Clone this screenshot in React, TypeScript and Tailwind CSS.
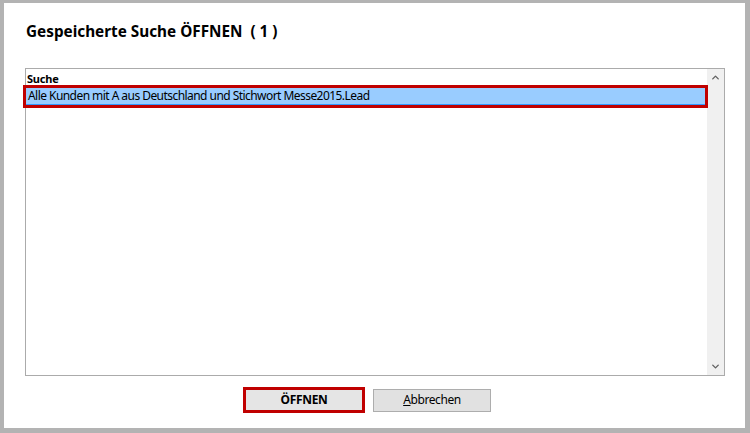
import { ChevronUp, ChevronDown } from 'lucide-react';

const font = { fontFamily: '"Noto Sans", "Open Sans", sans-serif' };

export default function App() {
  return (
    <div className="w-[750px] h-[433px] bg-[#b3b3b3] pt-[3px] pl-[4px] pr-[5px] pb-[5px]" style={font}>
      <div className="w-full h-full bg-white flex flex-col">
        {/* Title */}
        <div className="pl-[22px] pt-[18px] h-[65px]">
          <h1 className="text-[15.3px] leading-[20px] font-bold text-black">
            Gespeicherte Suche ÖFFNEN&nbsp;&nbsp;( 1 )
          </h1>
        </div>

        {/* List */}
        <div className="ml-[21px] w-[700px] h-[308px] border border-[#ababab] flex">
          <div className="flex-1 flex flex-col">
            <div className="h-[19px] pl-[1px] text-[11px] leading-[19px] font-bold text-black tracking-[-0.2px]">Suche</div>
            <div className="relative z-10 mr-[2px] h-[17px] bg-[#99ccff] border-b border-[#3399ff] pl-[2px] text-[12px] leading-[16px] text-black tracking-[-0.55px] outline-[3px] outline-solid outline-[#c00000]">
              Alle Kunden mit A aus Deutschland und Stichwort Messe2015.Lead
            </div>
          </div>
          <div className="w-[17px] bg-[#f0f0f0] flex flex-col justify-between items-center py-[3px]">
            <ChevronUp className="w-[11px] h-[11px] text-[#606060]" strokeWidth={3} />
            <ChevronDown className="w-[11px] h-[11px] text-[#606060]" strokeWidth={3} />
          </div>
        </div>

        {/* Buttons */}
        <div className="flex items-center gap-[8px] pl-[239px] mt-[11px]">
          <button className="w-[122px] h-[26px] border-[3px] border-[#c00000] bg-[#e5e5e5] text-[12px] font-bold text-black tracking-[-0.3px]">
            ÖFFNEN
          </button>
          <button className="w-[118px] h-[23px] border border-[#adadad] bg-[#e1e1e1] text-[12px] text-black tracking-[-0.4px]">
            <span className="underline">A</span>bbrechen
          </button>
        </div>
      </div>
    </div>
  );
}
